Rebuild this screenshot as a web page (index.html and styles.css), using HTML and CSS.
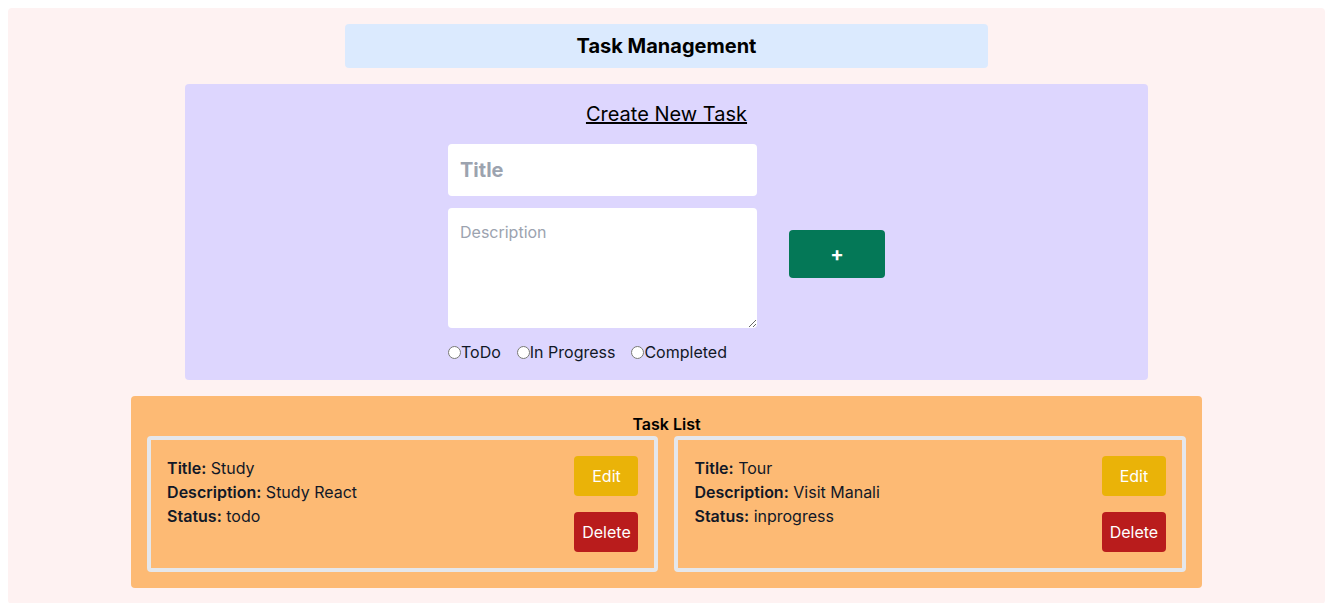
FILE: index.html
```html
<!DOCTYPE html>
<html>
<head>
<meta charset="utf-8">
<link rel="stylesheet" href="styles.css">
</head>
<body>
<div class="app">
  <h1 class="header">Task Management</h1>
  <section class="create">
    <h2 class="create-title">Create New Task</h2>
    <div class="form-row">
      <div class="fields">
        <input class="title-input" type="text" placeholder="Title">
        <textarea class="desc-input" placeholder="Description"></textarea>
        <div class="radios">
          <label class="radio"><input type="radio" name="status">ToDo</label>
          <label class="radio"><input type="radio" name="status">In Progress</label>
          <label class="radio"><input type="radio" name="status">Completed</label>
        </div>
      </div>
      <button class="add-btn">+</button>
    </div>
  </section>
  <section class="list">
    <h3 class="list-title">Task List</h3>
    <div class="cards">
      <div class="card">
        <div class="info">
          <p><b>Title:</b> Study</p>
          <p><b>Description:</b> Study React</p>
          <p><b>Status:</b> todo</p>
        </div>
        <div class="actions">
          <button class="btn edit">Edit</button>
          <button class="btn delete">Delete</button>
        </div>
      </div>
      <div class="card">
        <div class="info">
          <p><b>Title:</b> Tour</p>
          <p><b>Description:</b> Visit Manali</p>
          <p><b>Status:</b> inprogress</p>
        </div>
        <div class="actions">
          <button class="btn edit">Edit</button>
          <button class="btn delete">Delete</button>
        </div>
      </div>
    </div>
  </section>
</div>
</body>
</html>
```

FILE: styles.css
```css
* { box-sizing: border-box; }
body {
  margin: 8px 3px 8px 8px;
  font-family: Inter, "Noto Sans", sans-serif;
  font-size: 16px;
  line-height: 24px;
  color: #111827;
}
h1, h2, h3, p { margin: 0; }
.app {
  background: #fef2f2;
  border-radius: 4px;
  padding: 16px;
  display: flex;
  flex-direction: column;
  align-items: center;
  gap: 16px;
}
.header {
  width: 50%;
  background: #dbeafe;
  border-radius: 4px;
  padding: 8px;
  text-align: center;
  font-size: 20px;
  line-height: 28px;
  font-weight: 700;
  color: #000;
}
.create {
  width: 75%;
  background: #ddd6fe;
  border-radius: 4px;
  padding: 16px;
  display: flex;
  flex-direction: column;
  align-items: center;
}
.create-title {
  font-size: 20px;
  line-height: 28px;
  font-weight: 400;
  text-decoration: underline;
  color: #000;
  margin-bottom: 16px;
}
.form-row {
  display: flex;
  align-items: center;
  gap: 32px;
}
.fields {
  display: flex;
  flex-direction: column;
  width: 309px;
}
.title-input {
  border: none;
  border-radius: 4px;
  padding: 12px;
  height: 52px;
  font-family: inherit;
  font-size: 20px;
  line-height: 28px;
  font-weight: 700;
  outline: none;
  margin: 0 0 12px 0;
}
.title-input::placeholder { color: #9ca3af; }
.desc-input {
  border: none;
  border-radius: 4px;
  padding: 12px;
  height: 120px;
  font-family: inherit;
  font-size: 16px;
  line-height: 24px;
  outline: none;
  margin: 0 0 12px 0;
  resize: vertical;
  display: block;
}
.desc-input::placeholder { color: #9ca3af; }
.radios {
  display: flex;
  gap: 16px;
  color: #111827;
}
.radio {
  display: flex;
  align-items: center;
}
.radio input {
  margin: 0;
  width: 13px;
  height: 13px;
}
.add-btn {
  width: 96px;
  height: 48px;
  background: #047857;
  color: #fff;
  border: none;
  border-radius: 4px;
  font-family: inherit;
  font-size: 20px;
  font-weight: 700;
  margin: 0;
}
.list {
  width: calc(100% * 5 / 6);
  background: #fdba74;
  border-radius: 4px;
  padding: 16px;
}
.list-title {
  text-align: center;
  font-size: 16px;
  line-height: 24px;
  font-weight: 600;
  color: #000;
}
.cards {
  display: grid;
  grid-template-columns: 1fr 1fr;
  gap: 16px;
}
.card {
  border: 4px solid #e5e7eb;
  border-radius: 4px;
  padding: 16px;
  display: flex;
  justify-content: space-between;
}
.info b { font-weight: 600; }
.actions {
  display: flex;
  flex-direction: column;
  gap: 16px;
}
.btn {
  width: 64px;
  height: 40px;
  border: none;
  border-radius: 4px;
  color: #fff;
  font-family: inherit;
  font-size: 16px;
  padding: 0;
  margin: 0;
}
.edit { background: #eab308; }
.delete { background: #b91c1c; }
```
